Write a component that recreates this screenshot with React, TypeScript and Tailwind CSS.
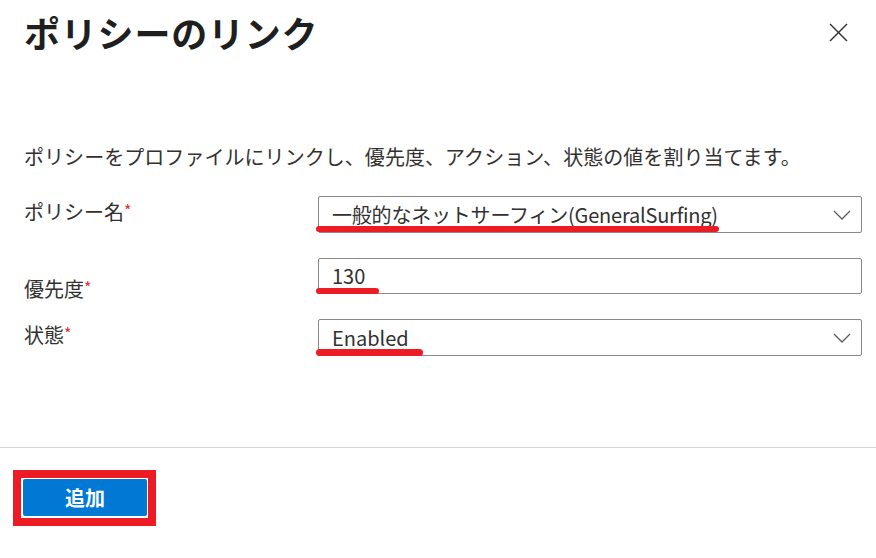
import React from "react";

const Chevron = () => (
  <svg width="18" height="10" viewBox="0 0 18 10" className="shrink-0">
    <polyline points="1,1 9,9 17,1" fill="none" stroke="#605e5c" strokeWidth="1.3" />
  </svg>
);

const Label = ({ text, cls }: { text: string; cls: string }) => (
  <div className={`text-[20px] leading-[28px] ${cls}`}>
    {text}
    <span className="text-[#d13438] text-[16px] align-top relative top-[-2px]">*</span>
  </div>
);

export default function App() {
  return (
    <div className="w-[876px] h-[558px] bg-white text-[#323130] font-['Noto_Sans_CJK_JP',sans-serif] overflow-hidden">
      <div className="flex items-center justify-between pl-[24px] pr-[28px] pt-[8px] h-[56px]">
        <div className="text-[36px] font-bold leading-[48px] tracking-[0.8px] text-[#1f1f1f]">ポリシーのリンク</div>
        <svg width="19" height="19" viewBox="0 0 19 19">
          <line x1="1" y1="1" x2="18" y2="18" stroke="#323130" strokeWidth="1.4" />
          <line x1="18" y1="1" x2="1" y2="18" stroke="#323130" strokeWidth="1.4" />
        </svg>
      </div>

      <div className="mt-[87px] pl-[24px] text-[20px] leading-[28px] tracking-[0.05px]">
        ポリシーをプロファイルにリンクし、優先度、アクション、状態の値を割り当てます。
      </div>

      <div className="mt-[25px] grid grid-cols-[294px_1fr] gap-y-[25px] pl-[24px] pr-[14px]">
        <Label text="ポリシー名" cls="pt-[2px]" />
        <div className="relative h-[37px] border border-[#8a8886] rounded-[2px] flex items-center justify-between pl-[13px] pr-[10px]">
          <span className="text-[20px] leading-[28px] tracking-[-0.2px]">一般的なネットサーフィン(GeneralSurfing)</span>
          <Chevron />
          <div className="absolute left-[-3px] top-[29px] w-[403px] h-[6px] rounded-full bg-[#ed1c24]" />
        </div>

        <Label text="優先度" cls="h-[36px] pt-[17px]" />
        <div className="relative h-[36px] border border-[#8a8886] rounded-[2px] flex items-center pl-[13px]">
          <span className="text-[20px] leading-[28px]">130</span>
          <div className="absolute left-[-3px] top-[29px] w-[63px] h-[6px] rounded-full bg-[#ed1c24]" />
        </div>

        <Label text="状態" cls="pt-[2px]" />
        <div className="relative h-[37px] border border-[#8a8886] rounded-[2px] flex items-center justify-between pl-[13px] pr-[10px]">
          <span className="text-[20px] leading-[28px]">Enabled</span>
          <Chevron />
          <div className="absolute left-[-3px] top-[29px] w-[107px] h-[7px] rounded-full bg-[#ed1c24]" />
        </div>
      </div>

      <div className="mt-[91px] h-px bg-[#d6d6d6]" />

      <div className="mt-[22px] ml-[13px] w-[143px] h-[56px] border-[8px] border-[#ed1c24] pt-[1px] pl-[2px]">
        <div className="w-[124px] h-[37px] bg-[#0078d4] rounded-[2px] flex items-center justify-center text-white font-bold text-[20px] leading-none">
          追加
        </div>
      </div>
    </div>
  );
}
